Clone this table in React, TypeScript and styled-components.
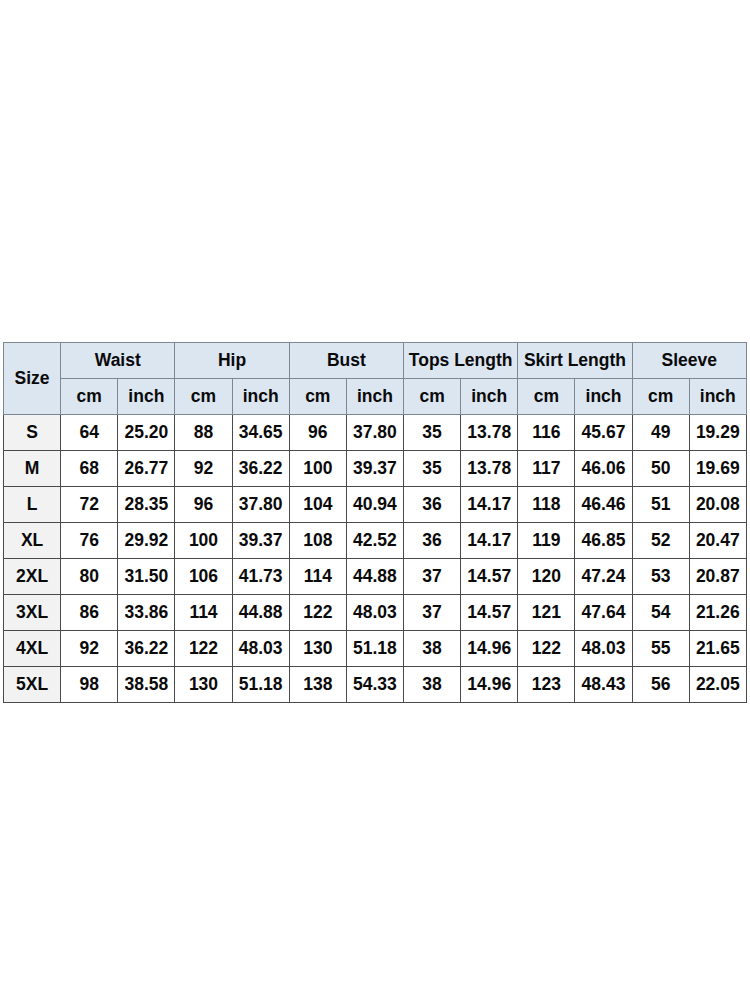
import React from "react";
import styled, { createGlobalStyle } from "styled-components";

const GlobalStyle = createGlobalStyle`
  html, body {
    margin: 0;
    padding: 0;
    background: #ffffff;
  }
`;

const Page = styled.div`
  width: 750px;
  height: 1000px;
  padding: 342px 0 0 3px;
  box-sizing: border-box;
  background: #ffffff;
`;

const Table = styled.table`
  width: 743px;
  border-collapse: collapse;
  table-layout: fixed;
  font-family: "Liberation Sans", Arial, sans-serif;
  font-weight: bold;
  font-size: 17.5px;
  color: #0a0a0a;
  border: 1.5px solid #6b6b6b;
`;

const Row = styled.tr`
  height: 36px;
`;

const HeadCell = styled.th`
  background: #dce6f1;
  border: 1px solid #7d8791;
  font-weight: bold;
  padding: 0;
  text-align: center;
  white-space: nowrap;
`;

const Cell = styled.td<{ $size?: boolean }>`
  background: ${({ $size }) => ($size ? "#f2f2f2" : "#ffffff")};
  border: 1px solid #4a4a4a;
  padding: 0;
  text-align: center;
  white-space: nowrap;
`;

const groups = ["Waist", "Hip", "Bust", "Tops Length", "Skirt Length", "Sleeve"];

const rows: string[][] = [
  ["S", "64", "25.20", "88", "34.65", "96", "37.80", "35", "13.78", "116", "45.67", "49", "19.29"],
  ["M", "68", "26.77", "92", "36.22", "100", "39.37", "35", "13.78", "117", "46.06", "50", "19.69"],
  ["L", "72", "28.35", "96", "37.80", "104", "40.94", "36", "14.17", "118", "46.46", "51", "20.08"],
  ["XL", "76", "29.92", "100", "39.37", "108", "42.52", "36", "14.17", "119", "46.85", "52", "20.47"],
  ["2XL", "80", "31.50", "106", "41.73", "114", "44.88", "37", "14.57", "120", "47.24", "53", "20.87"],
  ["3XL", "86", "33.86", "114", "44.88", "122", "48.03", "37", "14.57", "121", "47.64", "54", "21.26"],
  ["4XL", "92", "36.22", "122", "48.03", "130", "51.18", "38", "14.96", "122", "48.03", "55", "21.65"],
  ["5XL", "98", "38.58", "130", "51.18", "138", "54.33", "38", "14.96", "123", "48.43", "56", "22.05"],
];

const App = () => {
  return (
    <Page>
      <GlobalStyle />
      <Table>
        <colgroup>
          {Array.from({ length: 13 }).map((_, i) => (
            <col key={i} style={{ width: 743 / 13 }} />
          ))}
        </colgroup>
        <thead>
          <Row>
            <HeadCell rowSpan={2}>Size</HeadCell>
            {groups.map((g) => (
              <HeadCell key={g} colSpan={2}>
                {g}
              </HeadCell>
            ))}
          </Row>
          <Row>
            {groups.map((g) => (
              <React.Fragment key={g}>
                <HeadCell>cm</HeadCell>
                <HeadCell>inch</HeadCell>
              </React.Fragment>
            ))}
          </Row>
        </thead>
        <tbody>
          {rows.map((r) => (
            <Row key={r[0]}>
              {r.map((v, i) => (
                <Cell key={i} $size={i === 0}>
                  {v}
                </Cell>
              ))}
            </Row>
          ))}
        </tbody>
      </Table>
    </Page>
  );
};

export default App;
